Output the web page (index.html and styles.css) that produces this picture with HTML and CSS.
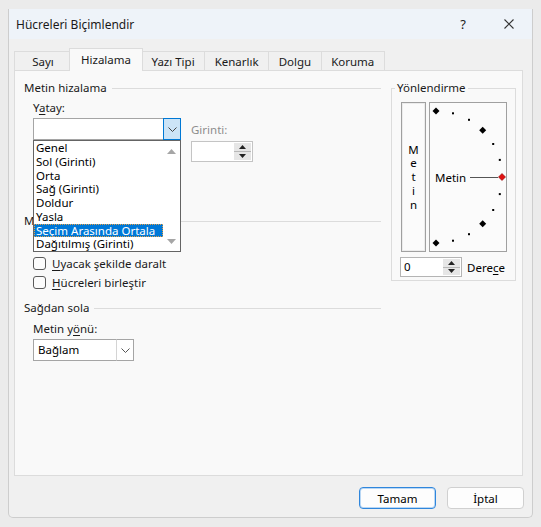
FILE: index.html
```html
<!DOCTYPE html>
<html lang="tr">
<head>
    <meta charset="UTF-8">
    <meta name="viewport" content="width=device-width, initial-scale=1.0">
    <title>Hücreleri Biçimlendir</title>
    <link rel="stylesheet" href="styles.css">
</head>
<body>
    <div class="dialog">
        <div class="titlebar">
            <span class="title">Hücreleri Biçimlendir</span>
            <span class="help">?</span>
            <svg class="close" width="10" height="10" viewBox="0 0 10 10">
                <path d="M0.5 0.5 L9.5 9.5 M9.5 0.5 L0.5 9.5" stroke="#333" stroke-width="1.1" fill="none"/>
            </svg>
        </div>

        <div class="tabs">
            <div class="tab first">Sayı</div>
            <div class="tab active">Hizalama</div>
            <div class="tab">Yazı Tipi</div>
            <div class="tab">Kenarlık</div>
            <div class="tab">Dolgu</div>
            <div class="tab">Koruma</div>
        </div>

        <div class="panel">
            <div class="left">
                <div class="section-head">Metin hizalama</div>
                <div class="indent">
                    <div class="label first-label">Y<u>a</u>tay:</div>
                    <div class="align-row">
                        <div class="combo-col">
                            <div class="combo">
                                <span class="combo-field"></span>
                                <span class="combo-drop open">
                                    <svg width="9" height="5" viewBox="0 0 9 5"><polyline points="0.5,0.5 4.5,4.5 8.5,0.5" fill="none" stroke="#444" stroke-width="1"/></svg>
                                </span>
                            </div>
                            <!-- vertical combo, hidden under the open list -->
                            <div class="combo vertical-combo">
                                <span class="combo-field"></span>
                                <span class="combo-drop"></span>
                            </div>

                            <div class="listbox">
                                <ul class="list-items">
                                    <li>Genel</li>
                                    <li>Sol (Girinti)</li>
                                    <li>Orta</li>
                                    <li>Sağ (Girinti)</li>
                                    <li>Doldur</li>
                                    <li>Yasla</li>
                                    <li class="selected">Seçim Arasında Ortala</li>
                                    <li>Dağıtılmış (Girinti)</li>
                                </ul>
                                <div class="scrollbar">
                                    <svg width="9" height="5" viewBox="0 0 9 5"><polygon points="0,5 4.5,0 9,5" fill="#a6a6a6"/></svg>
                                    <svg width="9" height="5" viewBox="0 0 9 5"><polygon points="0,0 4.5,5 9,0" fill="#a6a6a6"/></svg>
                                </div>
                            </div>
                        </div>

                        <div class="indent-col">
                            <div class="label disabled">Girinti:</div>
                            <div class="spin indent-spin">
                                <span class="spin-field"></span>
                                <span class="spin-btns">
                                    <span class="spin-btn"><svg width="7" height="4" viewBox="0 0 7 4"><polygon points="0,4 3.5,0 7,4" fill="#222"/></svg></span>
                                    <span class="spin-btn"><svg width="7" height="4" viewBox="0 0 7 4"><polygon points="0,0 3.5,4 7,0" fill="#222"/></svg></span>
                                </span>
                            </div>
                        </div>
                    </div>
                </div>

                <div class="section-head control-head">Metin kontrolü</div>
                <div class="indent">
                    <label class="check first-check"><span class="box"></span><u>U</u>yacak şekilde daralt</label>
                    <label class="check"><span class="box"></span><u>H</u>ücreleri birleştir</label>
                </div>

                <div class="section-head rtl-head">Sağdan sola</div>
                <div class="indent">
                    <div class="label dir-label">Metin y<u>ö</u>nü:</div>
                    <div class="combo dir-combo">
                        <span class="combo-field">Bağlam</span>
                        <span class="combo-drop">
                            <svg width="9" height="5" viewBox="0 0 9 5"><polyline points="0.5,0.5 4.5,4.5 8.5,0.5" fill="none" stroke="#555" stroke-width="1"/></svg>
                        </span>
                    </div>
                </div>
            </div>

            <fieldset class="orient">
                <legend>Yönlendirme</legend>
                <div class="orient-row">
                    <div class="vertical-text">
                        <span>M</span><span>e</span><span>t</span><span>i</span><span>n</span>
                    </div>
                    <div class="dial">
                        <svg width="76" height="148" viewBox="0 0 76 148">
                            <g fill="#000">
                                <polygon points="6,4.5 9.5,8 6,11.5 2.5,8"/>
                                <polygon points="52.7,23.8 56.2,27.3 52.7,30.8 49.2,27.3"/>
                                <polygon points="52.7,117.2 56.2,120.7 52.7,124.2 49.2,120.7"/>
                                <polygon points="6,136.5 9.5,140 6,143.5 2.5,140"/>
                                <rect x="22" y="9.3" width="2" height="2"/>
                                <rect x="38" y="15.8" width="2" height="2"/>
                                <rect x="62.2" y="40" width="2" height="2"/>
                                <rect x="68.8" y="55.9" width="2" height="2"/>
                                <rect x="68.8" y="90.1" width="2" height="2"/>
                                <rect x="62.2" y="106" width="2" height="2"/>
                                <rect x="38" y="130.2" width="2" height="2"/>
                                <rect x="22" y="136.7" width="2" height="2"/>
                            </g>
                            <text x="5" y="78.5" font-family="Noto Sans, sans-serif" font-size="11.5" fill="#000">Metin</text>
                            <line x1="40" y1="74.5" x2="68" y2="74.5" stroke="#555" stroke-width="1"/>
                            <polygon points="72,70.5 75.5,74 72,77.5 68.5,74" fill="#e01010" stroke="#8a0000" stroke-width="0.6"/>
                        </svg>
                    </div>
                </div>
                <div class="degree-row">
                    <div class="spin degree-spin">
                        <span class="spin-field">0</span>
                        <span class="spin-btns">
                            <span class="spin-btn"><svg width="7" height="4" viewBox="0 0 7 4"><polygon points="0,4 3.5,0 7,4" fill="#222"/></svg></span>
                            <span class="spin-btn"><svg width="7" height="4" viewBox="0 0 7 4"><polygon points="0,0 3.5,4 7,0" fill="#222"/></svg></span>
                        </span>
                    </div>
                    <span class="degree-label">Dere<u>c</u>e</span>
                </div>
            </fieldset>
        </div>

        <div class="footer">
            <button class="btn btn-default">Tamam</button>
            <button class="btn">İptal</button>
        </div>
    </div>
</body>
</html>
```

FILE: styles.css
```css
* {
    margin: 0;
    padding: 0;
    box-sizing: border-box;
}

body {
    font-family: 'Noto Sans', 'Open Sans', sans-serif;
    font-size: 11.5px;
    color: #000;
    background: #ebebeb;
    padding: 9px 8px 0 8px;
    width: 541px;
    height: 527px;
    overflow: hidden;
}

u {
    text-decoration-thickness: 1px;
    text-underline-offset: 2px;
}

.dialog {
    width: 525px;
    height: 509px;
    background: #f0f0f0;
    border: 1px solid #cdcdcd;
    border-top: none;
    border-radius: 0 0 5px 5px;
    display: flex;
    flex-direction: column;
}

/* title bar */
.titlebar {
    height: 30px;
    background: #eef3f9;
    display: flex;
    align-items: center;
    padding-left: 7px;
    font-size: 12px;
    color: #1a1a1a;
}

.title {
    flex: 1;
}

.help {
    margin-right: 38px;
    font-size: 13px;
}

.close {
    margin-right: 18px;
}

/* tabs */
.tabs {
    display: flex;
    align-items: flex-end;
    height: 22px;
    margin: 9px 0 0 5px;
}

.tab {
    height: 19px;
    line-height: 19px;
    padding: 0 9.5px;
    background: #f0f0f0;
    border: 1px solid #dcdcdc;
    border-bottom: none;
    margin-right: -1px;
    color: #1a1a1a;
}

.tab.first {
    width: 58px;
    text-align: center;
}

.tab.active {
    height: 23px;
    line-height: 21px;
    padding: 0 11px;
    margin: 0 -2px -1px -2px;
    background: #f9f9f9;
    position: relative;
    z-index: 1;
}

/* panel */
.panel {
    height: 406px;
    margin: 0 9px 0 5px;
    background: #f9f9f9;
    border: 1px solid #dcdcdc;
    padding: 9px 6px 0 9px;
    display: flex;
    gap: 10px;
    align-items: flex-start;
}

.left {
    width: 357px;
}

.section-head {
    display: flex;
    align-items: center;
    height: 16px;
    line-height: 16px;
    gap: 5px;
    color: #1a1a1a;
}

.section-head::after {
    content: '';
    flex: 1;
    border-top: 1px solid #dcdcdc;
    margin-top: 1px;
}

.control-head {
    margin-top: 9px;
}

.rtl-head {
    margin-top: 8px;
}

.indent {
    padding-left: 9px;
}

.label {
    height: 16px;
    line-height: 16px;
    color: #1a1a1a;
}

.first-label {
    margin-top: 4px;
}

.label.disabled {
    color: #8d8d8d;
}

.align-row {
    display: flex;
    margin-top: 2px;
}

.combo-col {
    width: 148px;
    position: relative;
}

.combo {
    display: flex;
    height: 22px;
    background: #fff;
}

.vertical-combo {
    margin-top: 42px;
}

.label + .combo {
    margin-top: 2px;
}

.combo-field {
    flex: 1;
    border: 1px solid #a5a5a5;
    border-right: none;
    padding-left: 4px;
    line-height: 20px;
}

.combo-drop {
    width: 18px;
    border: 1px solid #a5a5a5;
    border-left: 1px solid #d4d4d4;
    display: flex;
    align-items: center;
    justify-content: center;
}

.combo-drop.open {
    background: #cce4f7;
    border: 1px solid #0078d4;
}

.dir-label {
    margin-top: 5px;
}

.dir-combo {
    width: 101px;
}

/* open dropdown list, lies over the vertical combo */
.listbox {
    position: absolute;
    top: 22px;
    left: 0;
    width: 148px;
    height: 112px;
    background: #fff;
    border: 1px solid #646464;
    display: flex;
    z-index: 2;
}

.list-items {
    list-style: none;
    flex: 1;
}

.list-items li {
    height: 13.75px;
    line-height: 13.75px;
    padding-left: 2px;
    white-space: nowrap;
}

.list-items li.selected {
    background: #0078d7;
    color: #fff;
    outline: 1px dotted #e2a04a;
    outline-offset: -1px;
}

.scrollbar {
    width: 17px;
    display: flex;
    flex-direction: column;
    align-items: center;
    justify-content: space-between;
    padding: 8px 0 7px;
}

/* spin boxes */
.indent-col {
    margin-left: 10px;
    padding-top: 4px;
}

.spin {
    display: flex;
    background: #fff;
    border: 1px solid #c4c4c4;
}

.indent-spin {
    width: 62px;
    height: 21px;
    margin-top: 3px;
}

.spin-field {
    flex: 1;
    padding-left: 3px;
    line-height: 18px;
}

.spin-btns {
    width: 17px;
    margin: 1px;
    display: flex;
    flex-direction: column;
    background: #e6e6e6;
}

.spin-btn {
    flex: 1;
    display: flex;
    align-items: center;
    justify-content: center;
}

.spin-btn + .spin-btn {
    border-top: 1px solid #b8b8b8;
}

/* checkboxes */
.check {
    display: flex;
    align-items: center;
    height: 19px;
    color: #1a1a1a;
}

.first-check {
    margin-top: 25px;
}

.box {
    width: 13px;
    height: 13px;
    border: 1px solid #5a5a5a;
    border-radius: 3px;
    background: #fcfcfc;
    margin-right: 6px;
}

/* orientation group */
.orient {
    width: 125px;
    border: 1px solid #dcdcdc;
    padding: 6px 8px 3px 8px;
}

.orient legend {
    height: 16px;
    line-height: 16px;
    padding: 0 2px;
    margin-left: -5px;
    color: #1a1a1a;
}

.orient-row {
    display: flex;
    gap: 3px;
    margin-left: 1px;
}

.vertical-text {
    width: 25px;
    height: 150px;
    background: #fbfbfb;
    border: 1px solid #a0a0a0;
    box-shadow: inset 0 0 0 1px #ececec;
    display: flex;
    flex-direction: column;
    align-items: center;
    justify-content: center;
}

.vertical-text span {
    height: 13.75px;
    line-height: 13.75px;
}

.dial {
    width: 78px;
    height: 150px;
    background: #fbfbfb;
    border: 1px solid #a0a0a0;
}

.dial svg {
    display: block;
}

.degree-row {
    display: flex;
    align-items: center;
    margin-top: 5px;
}

.degree-spin {
    width: 62px;
    height: 20px;
    border-color: #b4b4b4;
}

.degree-spin .spin-field {
    line-height: 18px;
}

.degree-label {
    margin-left: 5px;
}

/* footer buttons */
.footer {
    display: flex;
    justify-content: flex-end;
    gap: 11px;
    padding: 11px 8px 0 0;
}

.btn {
    width: 77px;
    height: 22px;
    font-family: inherit;
    font-size: 11.5px;
    color: #000;
    background: #fdfdfd;
    border: 1px solid #d0d0d0;
    border-radius: 4px;
}

.btn-default {
    border: 1px solid #2f86dc;
    box-shadow: inset 0 0 0 1px #b9d7f4;
}
```
